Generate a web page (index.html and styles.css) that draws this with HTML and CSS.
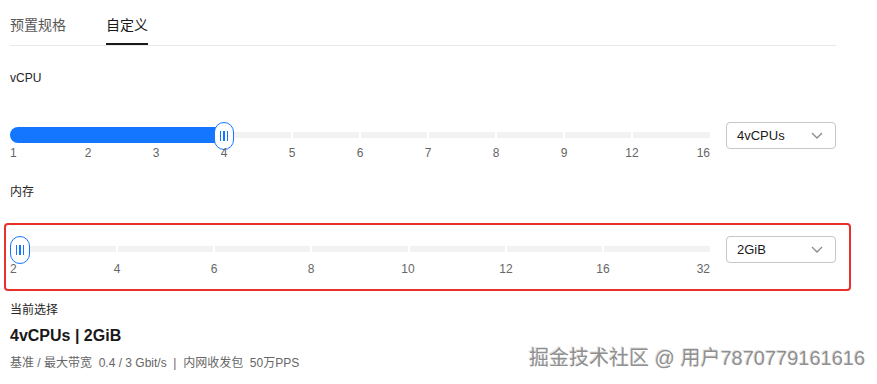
FILE: index.html
```html
<!DOCTYPE html>
<html>
<head>
	<meta charset="utf-8">
	<title>自定义规格</title>
	<link rel="stylesheet" href="styles.css">
</head>
<body>
	<div class="spec-panel">
		<div class="tabs">
			<div class="tab">预置规格</div>
			<div class="tab active">自定义</div>
		</div>

		<div class="field-label first">vCPU</div>
		<div class="slider-row">
			<div class="slider">
				<div class="rail">
					<div class="track">
						<span class="seg end"></span><span class="seg"></span><span class="seg"></span><span class="seg"></span><span class="seg"></span><span class="seg"></span><span class="seg"></span><span class="seg"></span><span class="seg"></span><span class="seg end"></span>
					</div>
					<div class="fill" style="width: 214px;"></div>
					<div class="thumb" style="left: 204px;"><i></i><i></i><i></i></div>
				</div>
				<div class="scale">
					<span class="start">1</span>
					<span style="left: 78px;">2</span>
					<span style="left: 146px;">3</span>
					<span style="left: 214px;">4</span>
					<span style="left: 282px;">5</span>
					<span style="left: 350px;">6</span>
					<span style="left: 418px;">7</span>
					<span style="left: 486px;">8</span>
					<span style="left: 554px;">9</span>
					<span style="left: 622px;">12</span>
					<span class="end">16</span>
				</div>
			</div>
			<div class="select">
				<span>4vCPUs</span>
				<svg width="12" height="7" viewBox="0 0 12 7"><polyline points="1,1 6,6 11,1" fill="none" stroke="#8a8a8a" stroke-width="1.3"/></svg>
			</div>
		</div>

		<div class="field-label">内存</div>
		<div class="highlight">
			<div class="slider-row">
				<div class="slider">
					<div class="rail">
						<div class="track mem">
							<span class="seg end"></span><span class="seg"></span><span class="seg"></span><span class="seg"></span><span class="seg"></span><span class="seg"></span><span class="seg end"></span>
						</div>
						<div class="thumb" style="left: 0px;"><i></i><i></i><i></i></div>
					</div>
					<div class="scale">
						<span class="start">2</span>
						<span style="left: 107px;">4</span>
						<span style="left: 204px;">6</span>
						<span style="left: 301px;">8</span>
						<span style="left: 398px;">10</span>
						<span style="left: 496px;">12</span>
						<span style="left: 593px;">16</span>
						<span class="end">32</span>
					</div>
				</div>
				<div class="select">
					<span>2GiB</span>
					<svg width="12" height="7" viewBox="0 0 12 7"><polyline points="1,1 6,6 11,1" fill="none" stroke="#8a8a8a" stroke-width="1.3"/></svg>
				</div>
			</div>
		</div>

		<div class="summary-label">当前选择</div>
		<div class="summary-title">4vCPUs | 2GiB</div>
		<div class="summary-detail">基准 / 最大带宽&nbsp;&nbsp;0.4 / 3 Gbit/s&nbsp;&nbsp;|&nbsp;&nbsp;内网收发包&nbsp;&nbsp;50万PPS</div>
	</div>

	<div class="watermark">掘金技术社区 @ 用户7870779161616</div>
</body>
</html>
```

FILE: styles.css
```css
body {
	margin: 0;
	background: #fff;
	font-family: "Liberation Sans", "Noto Sans CJK SC", sans-serif;
	color: #191919;
}

.spec-panel {
	width: 826px;
	padding: 0 10px;
}

/* Tabs */

.tabs {
	display: flex;
	gap: 40px;
	padding-top: 15px;
	border-bottom: 1px solid #e8e8e8;
}

.tab {
	font-size: 14px;
	line-height: 20px;
	padding-bottom: 8px;
	border-bottom: 2px solid transparent;
	color: #575757;
}

.tab.active {
	color: #191919;
	border-bottom-color: #191919;
}

/* Fields */

.field-label {
	font-size: 12px;
	line-height: 20px;
	color: #252525;
	margin-top: 21px;
}

.field-label.first {
	margin-top: 22px;
}

.slider-row {
	display: flex;
	gap: 16px;
	align-items: flex-start;
	margin-top: 34px;
}

.highlight .slider-row {
	margin-top: 0;
}

.slider {
	width: 700px;
}

.rail {
	position: relative;
	height: 28px;
}

.track {
	display: flex;
	gap: 2px;
	height: 6px;
	padding-top: 10px;
}

.seg {
	flex: 1 1 0;
	background: #f2f2f2;
}

.seg.end {
	flex: 0 0 77px;
}

.track.mem .seg.end {
	flex: 0 0 106px;
}

.fill {
	position: absolute;
	left: 0;
	top: 5px;
	height: 16px;
	background: #1476ff;
	border-radius: 8px 0 0 8px;
}

.thumb {
	position: absolute;
	top: 0;
	width: 20px;
	height: 28px;
	box-sizing: border-box;
	border: 1.5px solid #1476ff;
	border-radius: 10px;
	background: #fff;
	display: flex;
	align-items: center;
	justify-content: center;
	gap: 2px;
}

.thumb i {
	display: block;
	width: 1.5px;
	height: 10px;
	background: #1476ff;
}

.scale {
	position: relative;
	height: 16px;
	margin-top: -5px;
	font-size: 12px;
	line-height: 16px;
	color: #666;
}

.scale span {
	position: absolute;
	top: 0;
	transform: translateX(-50%);
}

.scale span.start {
	left: 0;
	transform: none;
}

.scale span.end {
	right: 0;
	transform: none;
}

.select {
	width: 110px;
	height: 27px;
	box-sizing: border-box;
	border: 1px solid #c6c6c6;
	border-radius: 4px;
	display: flex;
	align-items: center;
	justify-content: space-between;
	padding: 0 12px 0 10px;
	font-size: 13px;
}

/* Red outline around memory row */

.highlight {
	margin: 21px 0 0 -6px;
	width: 847px;
	box-sizing: border-box;
	border: 2px solid #e8312b;
	border-radius: 4px;
	padding: 11px 13px 12px 4px;
}

.highlight .scale {
	margin-top: -3px;
}

/* Summary */

.summary-label {
	font-size: 12px;
	line-height: 20px;
	color: #252525;
	margin-top: 9px;
}

.summary-title {
	font-size: 16px;
	font-weight: bold;
	line-height: 22px;
	margin-top: 5px;
}

.summary-detail {
	font-size: 12px;
	line-height: 18px;
	color: #666;
	margin-top: 7px;
}

.watermark {
	position: absolute;
	right: 12px;
	top: 346px;
	font-size: 20px;
	line-height: 24px;
	color: #8f8f8f;
	text-shadow: 1px 1px 0 #fff, -1px -1px 0 #e0e0e0;
}
```
